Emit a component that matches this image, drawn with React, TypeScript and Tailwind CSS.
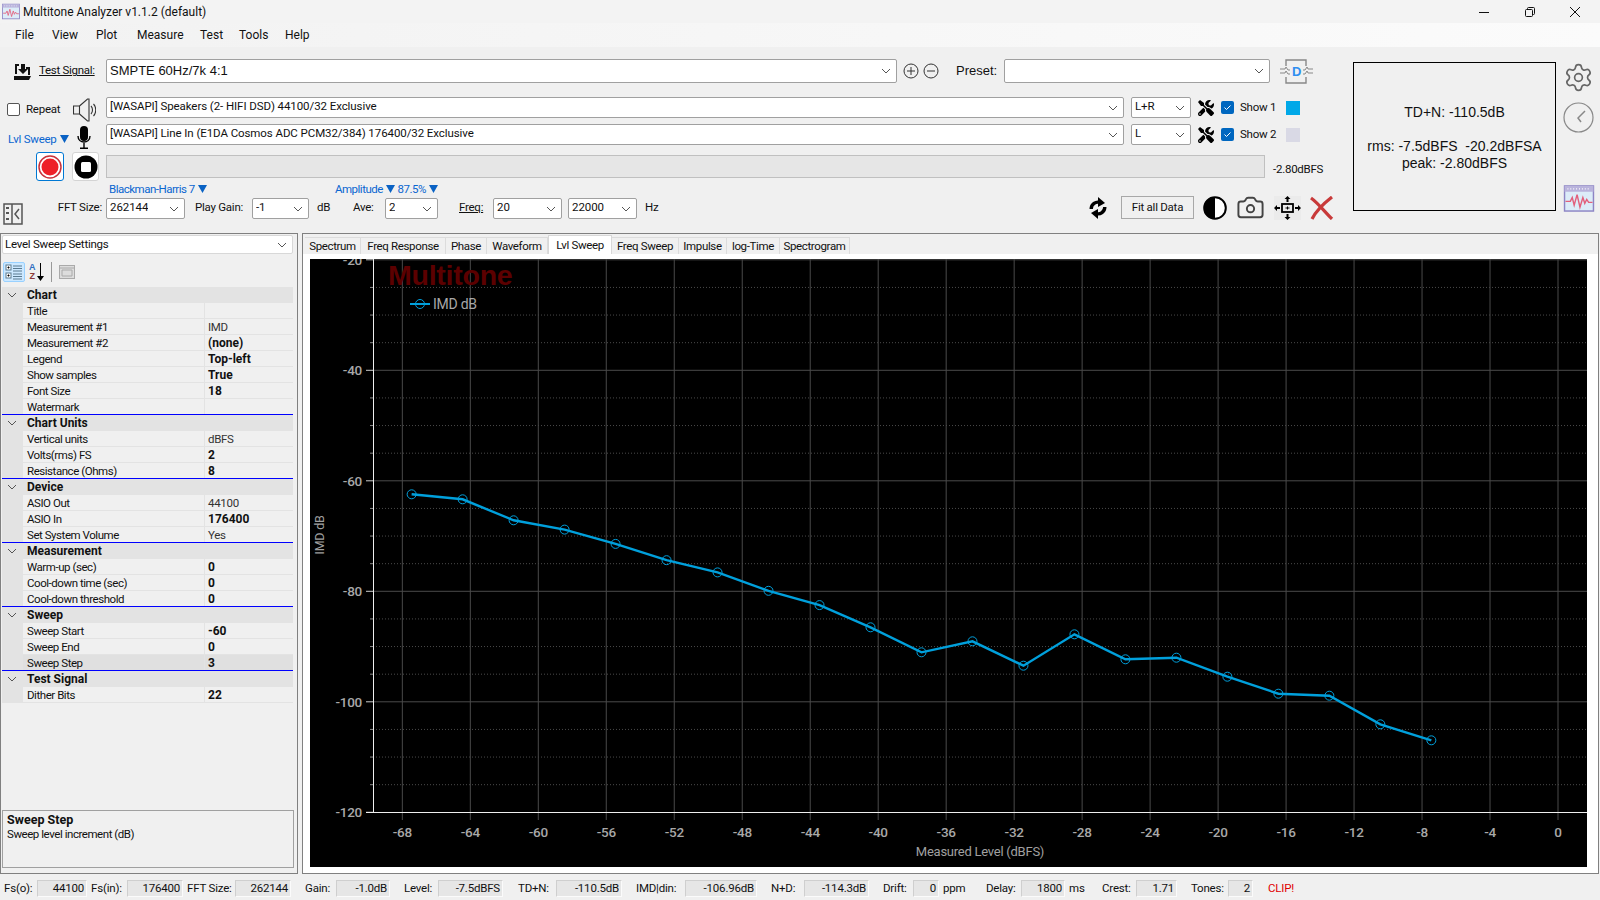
import React from "react";
import { Settings, Camera } from "lucide-react";
import { FaTools } from "react-icons/fa";

type Row = [string, string, boolean?];

const groups: { name: string; rows: Row[] }[] = [
  {
    name: "Chart",
    rows: [
      ["Title", ""],
      ["Measurement #1", "IMD"],
      ["Measurement #2", "(none)", true],
      ["Legend", "Top-left", true],
      ["Show samples", "True", true],
      ["Font Size", "18", true],
      ["Watermark", ""],
    ],
  },
  {
    name: "Chart Units",
    rows: [
      ["Vertical units", "dBFS"],
      ["Volts(rms) FS", "2", true],
      ["Resistance (Ohms)", "8", true],
    ],
  },
  {
    name: "Device",
    rows: [
      ["ASIO Out", "44100"],
      ["ASIO In", "176400", true],
      ["Set System Volume", "Yes"],
    ],
  },
  {
    name: "Measurement",
    rows: [
      ["Warm-up (sec)", "0", true],
      ["Cool-down time (sec)", "0", true],
      ["Cool-down threshold", "0", true],
    ],
  },
  {
    name: "Sweep",
    rows: [
      ["Sweep Start", "-60", true],
      ["Sweep End", "0", true],
      ["Sweep Step", "3", true],
    ],
  },
  { name: "Test Signal", rows: [["Dither Bits", "22", true]] },
];

const menus = [
  ["File", "w-[37px]"],
  ["View", "w-[44px]"],
  ["Plot", "w-[41px]"],
  ["Measure", "w-[63px]"],
  ["Test", "w-[39px]"],
  ["Tools", "w-[46px]"],
  ["Help", "w-[40px]"],
];

const tabs = [
  ["Spectrum", "w-[56px]"],
  ["Freq Response", "w-[85px]"],
  ["Phase", "w-[41px]"],
  ["Waveform", "w-[61px]"],
  ["Lvl Sweep", "w-[64px]"],
  ["Freq Sweep", "w-[67px]"],
  ["Impulse", "w-[48px]"],
  ["log-Time", "w-[53px]"],
  ["Spectrogram", "w-[70px]"],
];

const stats = [
  { label: "Fs(o):", value: "44100", lw: "w-[33px] ml-[4px]", bw: "w-[50px]" },
  { label: "Fs(in):", value: "176400", lw: "w-[36px] ml-[4px]", bw: "w-[56px]" },
  { label: "FFT Size:", value: "262144", lw: "w-[48px] ml-[4px]", bw: "w-[56px]" },
  { label: "Gain:", value: "-1.0dB", lw: "w-[31px] ml-[14px]", bw: "w-[54px]" },
  { label: "Level:", value: "-7.5dBFS", lw: "w-[34px] ml-[14px]", bw: "w-[65px]" },
  { label: "TD+N:", value: "-110.5dB", lw: "w-[38px] ml-[15px]", bw: "w-[66px]" },
  { label: "IMD|din:", value: "-106.96dB", lw: "w-[49px] ml-[14px]", bw: "w-[72px]" },
  { label: "N+D:", value: "-114.3dB", lw: "w-[33px] ml-[14px]", bw: "w-[65px]" },
  { label: "Drift:", value: "0", lw: "w-[30px] ml-[14px]", bw: "w-[26px]", unit: "ppm", uw: "w-[47px]" },
  { label: "Delay:", value: "1800", lw: "w-[35px]", bw: "w-[44px]", unit: "ms", uw: "w-[37px]" },
  { label: "Crest:", value: "1.71", lw: "w-[34px]", bw: "w-[41px]" },
  { label: "Tones:", value: "2", lw: "w-[37px] ml-[14px]", bw: "w-[25px]" },
];

const imd = [
  494.3, 499.3, 520.3, 529.6, 543.9, 560.2, 572.4, 590.8, 605.1, 627.3, 652.3, 641.3, 665.7, 634.3, 659.3, 657.7, 676.7,
  693.7, 695.7, 724.3, 740.3,
];

const xOf = (db: number) => 1558 + db * 16.995;
const yOf = (db: number) => 370.3 + (-40 - db) * 5.525;

function Chevron() {
  return (
    <svg width="10" height="6" viewBox="0 0 10 6" className="shrink-0" fill="none" stroke="#555" strokeWidth="1">
      <path d="M1 1l4 4 4-4" />
    </svg>
  );
}

function Tri() {
  return (
    <svg width="9" height="8" viewBox="0 0 9 8" className="ml-px inline-block align-baseline" fill="#0a62c4">
      <path d="M0 0h9L4.500 8z" />
    </svg>
  );
}

function Combo({ text, className, big }: { text?: string; className: string; big?: boolean }) {
  return (
    <div
      className={`flex h-full shrink-0 items-center justify-between rounded-[2px] border border-[#a0a0a0] bg-white pl-[3px] pr-[5px] ${
        big ? "font-['Liberation_Sans',sans-serif] text-[13px] tracking-normal" : "tracking-[-0.08px]"
      } ${className}`}
    >
      <span className={`truncate ${big ? "" : "pb-[2px]"}`}>{text}</span>
      <Chevron />
    </div>
  );
}

function AppGlyph({ className }: { className: string }) {
  return (
    <svg className={className} viewBox="0 0 32 28" fill="none">
      <rect x="1" y="1" width="30" height="26" fill="#dcecf8" stroke="#8d84c4" strokeWidth="1.5" />
      <rect x="1" y="1" width="30" height="6" fill="#b9b3dc" />
      <path d="M4 4h24" stroke="#fff" strokeWidth="1.5" strokeDasharray="1 2" />
      <path d="M2 17h5l2-4 2 8 3-11 3 13 3-10 2 6 2-4 2 3h4" stroke="#e2607c" strokeWidth="1.5" />
    </svg>
  );
}

function DeviceIcons({ show, swatch }: { show: string; swatch: string }) {
  return (
    <>
      <FaTools className="ml-[7px] h-4 w-4 shrink-0 text-black" />
      <div className="ml-[7px] flex h-[13px] w-[13px] shrink-0 items-center justify-center rounded-[2px] bg-[#0067c0]">
        <svg width="9" height="9" viewBox="0 0 9 9" fill="none" stroke="#fff" strokeWidth="1">
          <path d="M1.5 4.5l2 2 4-4" />
        </svg>
      </div>
      <span className="ml-[6px] w-[46px] shrink-0">{show}</span>
      <div className={`h-[14px] w-[14px] shrink-0 ${swatch}`} />
    </>
  );
}

function Toolbar() {
  return (
    <div className="flex h-[186px] shrink-0">
      <div className="flex w-[1353px] shrink-0 flex-col">
        {/* test signal row */}
        <div className="mt-3 flex h-6 items-center pl-[14px]">
          <svg width="17" height="17" viewBox="0 0 17 17" className="shrink-0" fill="#111">
            <path d="M1 1h4v2H3v8H1z" />
            <path d="M7 1h4v5h3l-5 5-5-5h3z" />
            <path d="M12 4h4v8h-2V6h-2z" />
            <path d="M0 13h17l-2 4H0z" />
          </svg>
          <span className="ml-2 w-[67px] shrink-0 tracking-[-0.3px] underline">Test Signal:</span>
          <Combo big text="SMPTE 60Hz/7k 4:1" className="w-[791px]" />
          <svg width="36" height="16" viewBox="0 0 36 16" className="ml-[6px] shrink-0" fill="none" stroke="#333">
            <circle cx="8" cy="8" r="7" />
            <path d="M4 8h8M8 4v8" />
            <circle cx="28" cy="8" r="7" />
            <path d="M24 8h8" />
          </svg>
          <span className="ml-[17px] w-[48px] shrink-0 font-['Liberation_Sans',sans-serif] text-[13px] tracking-normal">
            Preset:
          </span>
          <Combo className="w-[266px]" />
          <svg width="35" height="25" viewBox="0 0 35 25" className="ml-[9px] shrink-0" fill="none" stroke="#888" strokeWidth="1.4">
            <path d="M7 7V1h20v6M7 18v6h20v-6" />
            <path d="M1 10h5l1-2 2 3h2M1 14h5l1-2 2 3h2M34 10h-5l-1-2-2 3h-2M34 14h-5l-1-2-2 3h-2" strokeWidth="1" />
            <text x="17.500" y="17" textAnchor="middle" fill="#2f8ff0" stroke="none" fontFamily="Liberation Sans" fontSize="13" fontWeight="700">
              D
            </text>
          </svg>
        </div>
        {/* output device */}
        <div className="mt-[14px] flex h-[21px] items-center pl-[7px]">
          <div className="mt-1 h-[13px] w-[13px] shrink-0 rounded-[2px] border border-[#555] bg-white" />
          <span className="ml-[6px] mt-[5px] w-[47px] shrink-0">Repeat</span>
          <svg width="23" height="24" viewBox="0 0 23 24" className="mt-[5px] shrink-0" fill="none" stroke="#333" strokeWidth="1.100">
            <path d="M0.500 8h6v8h-6zM6.500 8l8-7h1.500v22h-1.500l-8-7" />
            <path d="M18 8c2 2 2 6 0 8M20.500 6c3 3 3 9 0 12" />
          </svg>
          <div className="ml-[10px] flex h-full">
            <Combo text="[WASAPI] Speakers (2- HIFI DSD) 44100/32 Exclusive" className="w-[1018px]" />
            <Combo text="L+R" className="ml-[7px] w-[60px]" />
          </div>
          <DeviceIcons show="Show 1" swatch="bg-[#00a8e8]" />
        </div>
        {/* input device */}
        <div className="mt-[6px] flex h-[21px] items-center pl-2">
          <span className="mt-[11px] w-[69px] shrink-0 whitespace-nowrap text-[#0a66d0]">
            Lvl Sweep <Tri />
          </span>
          <svg width="14" height="23" viewBox="0 0 14 23" className="mt-[6px] shrink-0" fill="none" stroke="#000" strokeWidth="1.4">
            <rect x="3" y="0" width="8" height="15" rx="4" fill="#000" stroke="none" />
            <path d="M1 10c0 8 12 8 12 0M7 17v5M3 22.300h8" />
          </svg>
          <div className="ml-[15px] flex h-full">
            <Combo text="[WASAPI] Line In (E1DA Cosmos ADC PCM32/384) 176400/32 Exclusive" className="w-[1018px]" />
            <Combo text="L" className="ml-[7px] w-[60px]" />
          </div>
          <DeviceIcons show="Show 2" swatch="bg-[#d9d9e5]" />
        </div>
        {/* record, stop and progress */}
        <div className="mt-[7px] flex h-[29px] items-center pl-9">
          <div className="flex h-[29px] w-7 shrink-0 items-center justify-center rounded-[3px] border border-[#0078d4] bg-white">
            <svg width="24" height="24" viewBox="0 0 24 24">
              <circle cx="12" cy="12" r="11" fill="none" stroke="#c8323c" strokeWidth="1.5" />
              <circle cx="12" cy="12" r="8.500" fill="#ee2028" />
            </svg>
          </div>
          <div className="ml-2 flex h-[29px] w-[27px] shrink-0 items-center justify-center rounded-[3px] border border-[#d4d4d4] bg-white">
            <svg width="24" height="24" viewBox="0 0 24 24">
              <circle cx="12" cy="12" r="11.500" fill="#000" />
              <rect x="7" y="7" width="10" height="10" rx="1.500" fill="#fff" />
            </svg>
          </div>
          <div className="ml-[7px] h-[23px] w-[1159px] shrink-0 border border-[#c0c0c0] bg-[#e6e6e6]" />
          <span className="ml-2 mt-[7px] whitespace-nowrap">-2.80dBFS</span>
        </div>
        {/* window and amplitude links */}
        <div className="mt-[2px] flex h-[13px] items-center pl-[109px] leading-[13px] tracking-[-0.5px] text-[#0a66d0]">
          <span className="w-[226px] shrink-0">
            Blackman-Harris 7 <Tri />
          </span>
          <span>
            Amplitude <Tri /> 87.5% <Tri />
          </span>
        </div>
        {/* fft row */}
        <div className="flex h-[29px]">
          <svg width="20" height="22" viewBox="0 0 20 22" className="ml-[3px] mt-[7px] shrink-0" fill="none" stroke="#555" strokeWidth="1.500">
            <rect x="1" y="1" width="18" height="20" />
            <path d="M9 1v20M16 6l-4 5 4 5" />
            <path d="M3 5h3M3 10h3M3 16h3" strokeWidth="2" />
          </svg>
          <div className="mt-[2px] flex h-[21px] items-center">
            <span className="w-[83px] shrink-0 pb-[2px] pr-1 text-right">FFT Size:</span>
            <Combo text="262144" className="w-[79px]" />
            <span className="w-[67px] shrink-0 pb-[2px] pl-[10px]">Play Gain:</span>
            <Combo text="-1" className="w-[57px]" />
            <span className="w-[44px] shrink-0 pb-[2px] pl-2">dB</span>
            <span className="w-8 shrink-0 pb-[2px]">Ave:</span>
            <Combo text="2" className="w-[53px]" />
            <span className="w-[55px] shrink-0 pb-[2px] pl-[21px] underline">Freq:</span>
            <Combo text="20" className="w-[69px]" />
            <Combo text="22000" className="ml-[6px] w-[69px]" />
            <span className="w-[451px] shrink-0 pb-[2px] pl-2">Hz</span>
          </div>
          <div className="flex h-[23px] items-center">
            <svg width="20" height="24" viewBox="0 0 20 24" className="shrink-0" fill="#000">
              <path d="M3.200 13a6.800 6.800 0 0 1 9-6.500" fill="none" stroke="#000" strokeWidth="3.400" />
              <path d="M10 1l7 6-7 4z" />
              <path d="M16.800 11a6.800 6.800 0 0 1-9 6.500" fill="none" stroke="#000" strokeWidth="3.400" />
              <path d="M10 23l-7-6 7-4z" />
            </svg>
            <div className="ml-[13px] flex h-[23px] w-[73px] shrink-0 items-center justify-center border border-[#a8a8a8]">
              Fit all Data
            </div>
            <svg width="24" height="24" viewBox="0 0 24 24" className="ml-[9px] shrink-0">
              <circle cx="12" cy="12" r="10.800" fill="#fff" stroke="#000" strokeWidth="2" />
              <path d="M12 1a11 11 0 0 0 0 22z" fill="#000" />
            </svg>
            <Camera className="ml-[9px] h-[29px] w-[29px] shrink-0 text-[#444]" strokeWidth={1.6} />
            <svg width="27" height="24" viewBox="0 0 27 24" className="ml-[9px] shrink-0" fill="#000">
              <rect width="27" height="24" fill="#ebebeb" />
              <rect x="8" y="8" width="11" height="8" fill="none" stroke="#000" strokeWidth="1.800" />
              <path d="M11.500 12h4M13.500 10.500v3" stroke="#000" />
              <path d="M13.500 0l3 3h-2v3h-2V3h-2zM13.500 24l3-3h-2v-3h-2v3h-2zM0 12l3-3v2h3v2H3v2zM27 12l-3-3v2h-3v2h3v2z" />
            </svg>
            <svg width="25" height="24" viewBox="0 0 25 24" className="ml-2 shrink-0" fill="none" stroke="#c83a3a" strokeWidth="3.200">
              <path d="M2 2c7 5 14 14 21 21" />
              <path d="M23 1C14 8 7 15 3 23" />
            </svg>
          </div>
        </div>
      </div>
      {/* readout box */}
      <div className="mt-[15px] h-[149px] w-[203px] shrink-0 border border-black pt-[41px] text-center font-['Liberation_Sans',sans-serif] text-[14px] leading-4 tracking-normal">
        <div>TD+N: -110.5dB</div>
        <div className="mt-[18px] whitespace-pre">rms: -7.5dBFS  -20.2dBFSA</div>
        <div className="mt-px">peak: -2.80dBFS</div>
      </div>
      <div className="flex flex-col pl-[7px]">
        <Settings className="mt-[15px] h-[31px] w-[31px] text-[#666]" strokeWidth={1.3} />
        <svg width="31" height="31" viewBox="0 0 31 31" className="mt-[9px]" fill="none" stroke="#888" strokeWidth="1.200">
          <circle cx="15.500" cy="15.500" r="14.500" />
          <path d="M22 9l-7 7 3 4" strokeWidth="1.500" />
        </svg>
        <AppGlyph className="mt-[52px] h-[27px] w-8" />
      </div>
    </div>
  );
}

function SettingsPanel() {
  return (
    <div className="flex w-[298px] shrink-0 flex-col border border-[#808080]">
      <div className="ml-px mt-px flex h-[19px] w-[291px] items-center justify-between rounded-[2px] border border-[#d8d8d8] bg-white pl-[2px] pr-[5px]">
        <span className="pt-px">Level Sweep Settings</span>
        <Chevron />
      </div>
      <div className="flex h-[31px] items-center pl-[2px] pt-1">
        <div className="flex h-5 w-[22px] items-center justify-center rounded-[2px] border border-[#99d1ff] bg-[#cce8ff]">
          <svg width="18" height="16" viewBox="0 0 18 16" fill="none" stroke="#5a7a90">
            <rect x="1" y="1" width="5" height="5" fill="#fff" />
            <rect x="1" y="9" width="5" height="5" fill="#fff" />
            <path d="M3.500 2.500v2M3.500 10.500v2M2.500 3.500h2M2.500 11.500h2" stroke="#000" />
            <path d="M8 2h9M8 4.500h9M8 7h9M8 10h9M8 12.500h9M8 15h9" />
          </svg>
        </div>
        <div className="ml-[2px] flex w-[19px] items-center">
          <div className="flex w-[10px] flex-col text-center font-['Liberation_Sans',sans-serif] text-[9px] font-bold leading-[9px]">
            <span className="text-[#2f6fc0]">A</span>
            <span className="text-[#8c3a3a]">Z</span>
          </div>
          <svg width="7" height="18" viewBox="0 0 7 18" fill="#000">
            <path d="M3 0h1v13h3l-3.500 5L0 13h3z" />
          </svg>
        </div>
        <div className="ml-[5px] h-5 w-px bg-[#999]" />
        <svg width="16" height="16" viewBox="0 0 16 16" className="ml-[7px]" fill="#ddd" stroke="#aaa">
          <rect x="0.500" y="1.500" width="15" height="13" />
          <path d="M3 6h10v6H3zM0.500 4h15" fill="none" />
        </svg>
      </div>
      <div className="ml-px mt-[2px] w-[291px] text-[#111]">
        {groups.map((g, gi) => (
          <div key={g.name}>
            <div className="flex h-4 items-center bg-[#e3e3e3] text-[12px] font-bold tracking-normal">
              <div className="flex w-[21px] justify-center pr-px">
                <Chevron />
              </div>
              <span className="pl-1 leading-4">{g.name}</span>
            </div>
            {g.rows.map((r, ri) => {
              const last = ri === g.rows.length - 1 && gi < groups.length - 1;
              const picked = r[0] === "Sweep Step";
              return (
                <div
                  key={r[0]}
                  className={`flex h-4 border-b leading-4 ${last ? "border-[#0000ff]" : "border-[#e3e3e3]"} ${
                    picked ? "bg-[#e0e0e0]" : ""
                  }`}
                >
                  <div className="w-[21px] shrink-0 bg-[#e3e3e3]" />
                  <div className="w-[181px] shrink-0 pl-1 tracking-[-0.45px]">{r[0]}</div>
                  <div
                    className={`flex-1 border-l border-[#e3e3e3] pl-[3px] ${
                      r[2] ? "text-[12px] font-bold tracking-normal" : "tracking-[-0.3px] text-[#333]"
                    }`}
                  >
                    {r[1]}
                  </div>
                </div>
              );
            })}
          </div>
        ))}
      </div>
      <div className="flex-1" />
      <div className="mb-[5px] ml-px h-[58px] w-[292px] border border-[#a0a0a0] pl-1 pt-px leading-[15px]">
        <div className="text-[12.5px] font-bold tracking-normal">Sweep Step</div>
        <div className="tracking-[-0.45px]">Sweep level increment (dB)</div>
      </div>
    </div>
  );
}

function Chart() {
  const xTicks = Array.from({ length: 18 }, (_, i) => -68 + i * 4);
  const major = [-20, -40, -60, -80, -100, -120];
  const minor: number[] = [];
  for (let d = -25; d > -120; d -= 5) if (d % 20 !== 0) minor.push(d);
  const points = imd.map((y, i) => [xOf(-67.5 + i * 3) + 0.8, y]);
  const line = points.map((p) => p.join(",")).join(" ");

  return (
    <svg width="1277" height="608" viewBox="310 259 1277 608" className="block bg-black" fontFamily="Roboto, sans-serif">
      {xTicks.map((d) => (
        <line key={d} x1={xOf(d)} x2={xOf(d)} y1="259" y2="820" stroke="#4a4a4a" />
      ))}
      {minor.map((d) => (
        <g key={d}>
          <line x1="373" x2="1587" y1={yOf(d)} y2={yOf(d)} stroke="#4a4a4a" strokeDasharray="1 2" />
          <line x1="370" x2="373" y1={yOf(d)} y2={yOf(d)} stroke="#888" />
        </g>
      ))}
      {major.map((d) => (
        <g key={d}>
          {d !== -120 && <line x1="373" x2="1587" y1={yOf(d)} y2={yOf(d)} stroke="#4a4a4a" />}
          <line x1="366" x2="373" y1={yOf(d)} y2={yOf(d)} stroke="#ccc" />
          <text x="362" y={yOf(d) + 5} textAnchor="end" fill="#a8a8a8" fontSize="13.500" fontWeight="500">
            {d}
          </text>
        </g>
      ))}
      <line x1="373.500" x2="373.500" y1="259" y2="812" stroke="#eee" />
      <line x1="366" x2="1587" y1="812.500" y2="812.500" stroke="#eee" />
      {xTicks.map((d) => (
        <text key={d} x={xOf(d)} y="837" textAnchor="middle" fill="#a8a8a8" fontSize="13.500" fontWeight="500">
          {d}
        </text>
      ))}
      <text x="980" y="856" textAnchor="middle" fill="#a0a0a0" fontSize="13">
        Measured Level (dBFS)
      </text>
      <text x="324" y="535" textAnchor="middle" fill="#a0a0a0" fontSize="12.500" transform="rotate(-90 324 535)">
        IMD dB
      </text>
      <text x="388" y="285" fill="#5c0000" fontFamily="Liberation Sans, sans-serif" fontSize="28.500" fontWeight="700">
        Multitone
      </text>
      <line x1="410" x2="430" y1="304" y2="304" stroke="#00a0dc" strokeWidth="2" />
      <circle cx="420" cy="304" r="4.500" fill="none" stroke="#00a0dc" />
      <text x="433" y="309" fill="#a8a8a8" fontSize="14">
        IMD dB
      </text>
      <polyline points={line} fill="none" stroke="#00a0dc" strokeWidth="2.400" />
      {points.map((p) => (
        <circle key={p[0]} cx={p[0]} cy={p[1]} r="4.500" fill="none" stroke="#00a0dc" />
      ))}
    </svg>
  );
}

function ChartPanel() {
  return (
    <div className="flex w-[1297px] shrink-0 flex-col border border-[#808080]">
      <div className="flex h-5 shrink-0 items-end pl-[2px] tracking-[-0.35px]">
        {tabs.map(([t, w]) =>
          t === "Lvl Sweep" ? (
            <div key={t} className={`flex h-[19px] shrink-0 justify-center border-x border-t border-[#d8d8d8] bg-white pt-px ${w}`}>
              {t}
            </div>
          ) : (
            <div key={t} className={`flex h-[17px] shrink-0 items-center justify-center border-r border-t border-[#dcdcdc] pt-px ${w}`}>
              {t}
            </div>
          ),
        )}
      </div>
      <div className="flex-1 bg-white pl-[7px] pt-[5px]">
        <Chart />
      </div>
    </div>
  );
}

function StatusBar() {
  return (
    <div className="flex h-[26px] shrink-0 items-center pt-[3px] tracking-[-0.2px]">
      {stats.map((s) => (
        <React.Fragment key={s.label}>
          <span className={`shrink-0 whitespace-nowrap ${s.lw}`}>{s.label}</span>
          <div
            className={`h-[17px] shrink-0 border-y border-l border-r border-b-[#fbfbfb] border-l-[#cfcfcf] border-r-[#fbfbfb] border-t-[#cfcfcf] bg-[#e6e6e6] pr-[2px] text-right leading-[15px] ${s.bw}`}
          >
            {s.value}
          </div>
          {s.unit ? <span className={`shrink-0 pl-1 ${s.uw}`}>{s.unit}</span> : null}
        </React.Fragment>
      ))}
      <span className="ml-[15px] text-[#e00000]">CLIP!</span>
    </div>
  );
}

export default function App() {
  return (
    <div className="flex h-[900px] w-[1600px] flex-col overflow-hidden bg-[#f0f0f0] font-['Roboto',sans-serif] text-[11.5px] tracking-[-0.25px] text-[#111]">
      <div className="flex h-[23px] shrink-0 items-center bg-[#f3f3f3] text-[12px] tracking-normal">
        <AppGlyph className="ml-[2px] h-[17px] w-[18px]" />
        <span className="ml-[3px] flex-1">Multitone Analyzer v1.1.2 (default)</span>
        <svg width="12" height="12" viewBox="0 0 12 12" className="mr-[34px]" fill="none" stroke="#111">
          <path d="M1 6.500h10" />
        </svg>
        <svg width="12" height="12" viewBox="0 0 12 12" className="mr-[33px]" fill="none" stroke="#111">
          <rect x="1.500" y="3.500" width="7" height="7" rx="1" />
          <path d="M3.500 3.500v-1a1 1 0 0 1 1-1h5a1 1 0 0 1 1 1v5a1 1 0 0 1-1 1h-1" />
        </svg>
        <svg width="12" height="12" viewBox="0 0 12 12" className="mr-[19px]" fill="none" stroke="#111">
          <path d="M1 1l10 10M11 1L1 11" />
        </svg>
      </div>
      <div className="flex h-6 shrink-0 items-center bg-linear-to-r from-[#f2f2f2] to-[#fbfbfb] pl-[15px] text-[12px] tracking-normal">
        {menus.map(([m, w]) => (
          <span key={m} className={w}>
            {m}
          </span>
        ))}
      </div>
      <Toolbar />
      <div className="flex h-[641px] shrink-0 gap-1">
        <SettingsPanel />
        <ChartPanel />
      </div>
      <StatusBar />
    </div>
  );
}
